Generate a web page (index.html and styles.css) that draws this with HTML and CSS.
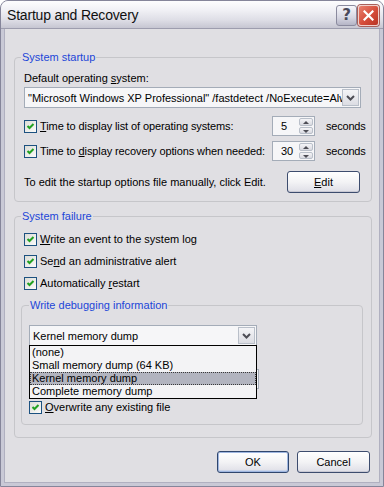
FILE: index.html
```html
<!DOCTYPE html>
<html lang="en">
<head>
    <meta charset="UTF-8">
    <meta name="viewport" content="width=device-width, initial-scale=1.0">
    <title>Startup and Recovery</title>
    <link rel="stylesheet" href="styles.css">
</head>
<body>
    <div class="window">
      <div class="titlebar">
        <span class="title">Startup and Recovery</span>
        <div class="caption-buttons">
          <span class="cap help">?</span>
          <span class="cap close">
            <svg width="11" height="11" viewBox="0 0 11 11"><path d="M1.5 1.5 L9.5 9.5 M9.5 1.5 L1.5 9.5" stroke="#fff" stroke-width="2.2" stroke-linecap="square"/></svg>
          </span>
        </div>
      </div>

      <div class="client">
        <fieldset class="group startup">
          <legend>System startup</legend>
          <div class="field-label">Default operating <u>s</u>ystem:</div>
          <div class="combo os-combo">
            <span class="combo-text">"Microsoft Windows XP Professional" /fastdetect /NoExecute=AlwaysOff</span>
            <span class="combo-btn"><svg width="9" height="6" viewBox="0 0 9 6"><path d="M1 1 L4.5 4.5 L8 1" fill="none" stroke="#4d4d55" stroke-width="2"/></svg></span>
          </div>

          <div class="spin-row first">
            <label class="check timer-label"><span class="box on"></span><span><u>T</u>ime to display list of operating systems:</span></label>
            <div class="spin"><span class="spin-val">5</span><span class="spin-btns"><span class="arrow up"></span><span class="arrow down"></span></span></div>
            <span class="unit">seconds</span>
          </div>
          <div class="spin-row">
            <label class="check timer-label"><span class="box on"></span><span>Time to <u>d</u>isplay recovery options when needed:</span></label>
            <div class="spin"><span class="spin-val">30</span><span class="spin-btns"><span class="arrow up"></span><span class="arrow down"></span></span></div>
            <span class="unit">seconds</span>
          </div>

          <div class="edit-row">
            <span>To edit the startup options file manually, click Edit.</span>
            <span class="btn edit-btn"><u>E</u>dit</span>
          </div>
        </fieldset>

        <fieldset class="group failure">
          <legend>System failure</legend>
          <label class="check row"><span class="box on"></span><span><u>W</u>rite an event to the system log</span></label>
          <label class="check row"><span class="box on"></span><span>Se<u>n</u>d an administrative alert</span></label>
          <label class="check row"><span class="box on"></span><span>Automatically <u>r</u>estart</span></label>

          <fieldset class="group debug">
            <legend>Write debugging information</legend>
            <div class="combo dump-combo">
              <span class="combo-text">Kernel memory dump</span>
              <span class="combo-btn"><svg width="9" height="6" viewBox="0 0 9 6"><path d="M1 1 L4.5 4.5 L8 1" fill="none" stroke="#4d4d55" stroke-width="2"/></svg></span>
              <ul class="dropdown">
                <li>(none)</li>
                <li>Small memory dump (64 KB)</li>
                <li class="selected">Kernel memory dump</li>
                <li>Complete memory dump</li>
              </ul>
            </div>
            <!-- dump file field sits under the open list -->
            <div class="dump-spacer"></div>
            <div class="textbox"></div>
            <label class="check row overwrite"><span class="box on"></span><span><u>O</u>verwrite any existing file</span></label>
          </fieldset>
        </fieldset>

        <div class="dialog-buttons">
          <span class="btn default">OK</span>
          <span class="btn">Cancel</span>
        </div>
      </div>
    </div>
</body>
</html>
```

FILE: styles.css
```css
* {
  box-sizing: border-box;
}

body {
  margin: 0;
  background: #ffffff;
  font-family: "Liberation Sans", Arial, sans-serif;
  font-size: 11px;
  line-height: 13px;
  color: #000;
}

u {
  text-decoration: underline;
  text-underline-offset: 1px;
}

.window {
  width: 384px;
  height: 487px;
  border: 1px solid #85859a;
  border-radius: 8px 8px 0 0;
  background: #c9c9d6;
  display: flex;
  flex-direction: column;
}

.titlebar {
  height: 28px;
  border-radius: 7px 7px 0 0;
  background: linear-gradient(#fdfdfe 0%, #f0f0f5 35%, #dedee6 70%, #c6c6d2 100%);
  border-bottom: 1px solid #9d9dae;
  display: flex;
  align-items: center;
  padding: 0 4px 0 6px;
}

.title {
  font-family: "Liberation Sans", Arial, sans-serif;
  font-size: 14px;
  letter-spacing: -0.2px;
  color: #101010;
  margin-top: 1px;
}

.caption-buttons {
  margin-left: auto;
  display: flex;
  gap: 1px;
  margin-top: 2px;
}

.cap {
  width: 21px;
  height: 21px;
  border-radius: 3px;
  display: flex;
  align-items: center;
  justify-content: center;
}

.cap.help {
  border: 1px solid #8a8a9e;
  background: linear-gradient(#f7f7fb, #d6d6e2 60%, #b5b5c6);
  color: #4a4a5a;
  font-weight: bold;
  font-size: 15px;
  font-family: "DejaVu Sans", sans-serif;
}

.cap.close {
  border: 1px solid #f0d0cc;
  background: linear-gradient(135deg, #e8806e, #d54c3a 55%, #b83424);
  box-shadow: 0 0 0 1px #a85f5a;
}

.client {
  flex: 1;
  margin: 0 3px 3px;
  background: #e0dfe3;
  border: 1px solid #b0b0c0;
  border-top: none;
  padding: 0 7px 0 9px;
  display: flex;
  flex-direction: column;
}

.group {
  margin: 0;
  border: 1px solid #c6c6ca;
  border-radius: 4px;
  min-inline-size: 0;
}

.group legend {
  color: #1c46d8;
  padding: 0 1px;
  margin-left: -3px;
  line-height: 13px;
}

.startup {
  margin-top: 22px;
  padding: 8px 10px 8px 9px;
}

.field-label {
  height: 13px;
}

.combo {
  position: relative;
  display: flex;
  height: 21px;
  margin-top: 2px;
  border: 1px solid #a4acb8;
  background: #f6f6f8;
  padding: 1px;
}

.combo-text {
  flex: 1;
  overflow: hidden;
  white-space: nowrap;
  padding: 3px 0 0 2px;
}

.combo-btn {
  width: 17px;
  border: 1px solid #b9bfc9;
  background: linear-gradient(#f4f4f7, #dcdde3);
  display: flex;
  align-items: center;
  justify-content: center;
}

.spin-row {
  display: flex;
  align-items: center;
  height: 20px;
  margin-top: 5px;
}

.spin-row.first {
  margin-top: 8px;
}

.check {
  display: flex;
  align-items: center;
  gap: 3px;
  white-space: nowrap;
}

.timer-label {
  width: 248px;
  flex-shrink: 0;
  letter-spacing: -0.1px;
}

.box {
  width: 13px;
  height: 13px;
  border: 1px solid #1c5180;
  background: linear-gradient(135deg, #dcdcd6, #fbfbfa);
  flex-shrink: 0;
}

.box.on {
  background-image:
    url("data:image/svg+xml;utf8,<svg xmlns='http://www.w3.org/2000/svg' width='11' height='11'><path d='M2.5 5 L4.5 7 L8.5 3' fill='none' stroke='%2321a121' stroke-width='2'/></svg>"),
    linear-gradient(135deg, #dcdcd6, #fbfbfa);
}

.spin {
  display: flex;
  width: 43px;
  height: 20px;
  flex-shrink: 0;
  border: 1px solid #a4acb8;
  background: #f6f6f8;
  padding: 1px;
}

.spin-val {
  flex: 1;
  padding: 2px 0 0 7px;
}

.spin-btns {
  width: 14px;
  display: flex;
  flex-direction: column;
  gap: 1px;
}

.arrow {
  flex: 1;
  border: 1px solid #b9bfc9;
  border-radius: 2px;
  background: linear-gradient(#f4f4f7, #d8d9e0);
  position: relative;
}

.arrow::after {
  content: "";
  position: absolute;
  left: 3px;
  top: 2px;
  border-left: 3px solid transparent;
  border-right: 3px solid transparent;
}

.arrow.up::after {
  border-bottom: 3px solid #4d4d55;
}

.arrow.down::after {
  border-top: 3px solid #4d4d55;
}

.unit {
  margin-left: 11px;
  white-space: nowrap;
  letter-spacing: -0.2px;
}

.edit-row {
  display: flex;
  align-items: center;
  margin-top: 10px;
}

.btn {
  width: 73px;
  height: 22px;
  border: 1px solid #3d4c6e;
  border-radius: 3px;
  background: linear-gradient(#ffffff, #f3f3f5 50%, #dedee6);
  box-shadow: inset 0 -1px 0 #c9c9d4;
  display: flex;
  align-items: center;
  justify-content: center;
}

.edit-btn {
  margin-left: auto;
  margin-right: 1px;
}

.failure {
  margin-top: 8px;
  padding: 10px 10px 12px 9px;
}

.check.row {
  height: 13px;
  margin-bottom: 9px;
}

.debug {
  margin: 2px -2px 0 -3px;
  padding: 13px 6px 10px 7px;
}

.debug legend {
  margin-left: 0;
}

.dump-combo {
  margin-top: 0;
  width: 228px;
}

.dropdown {
  position: absolute;
  left: -1px;
  top: 100%;
  width: 228px;
  margin: 0;
  padding: 0;
  list-style: none;
  border: 1px solid #000;
  background: #f3f3f5;
  z-index: 2;
}

.dropdown li {
  height: 13px;
  padding-left: 2px;
  line-height: 13px;
}

.dropdown li.selected {
  background: #b2b4bf;
  outline: 1px dotted #3a3a3a;
  outline-offset: -1px;
}

.dump-spacer {
  height: 13px;
  margin-top: 4px;
}

.textbox {
  width: 230px;
  height: 20px;
  margin-top: 6px;
  border: 1px solid #a4acb8;
  background: #f6f6f8;
}

.check.row.overwrite {
  margin-top: 12px;
  margin-bottom: 0;
}

.dialog-buttons {
  display: flex;
  justify-content: flex-end;
  gap: 8px;
  margin-top: 13px;
  padding-right: 2px;
}

.btn.default {
  width: 72px;
  border-color: #2f466e;
  box-shadow: inset 0 0 0 1px #9fb6e0, inset 0 -2px 0 #c9d4ea;
}
```
